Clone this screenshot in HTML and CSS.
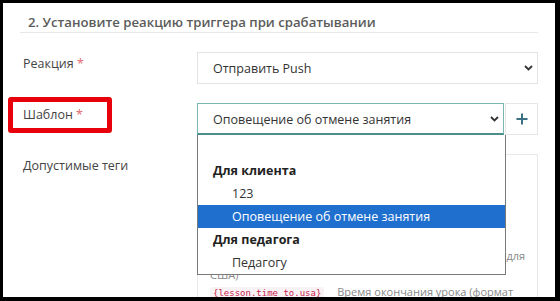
FILE: index.html
```html
<!DOCTYPE html>
<html lang="ru">
<head>
    <meta charset="UTF-8">
    <title>Триггер</title>
    <link rel="stylesheet" href="styles.css">
</head>
<body>
<div class="frame">
    <div class="section">
        <h3 class="section-title">2. Установите реакцию триггера при срабатывании</h3>

        <div class="row">
            <label class="row-label">Реакция <span class="req">*</span></label>
            <div class="control">
                <div class="select">
                    <span>Отправить Push</span>
                    <svg class="chev" width="9" height="6" viewBox="0 0 9 6"><path d="M1 1l3.5 3.5L8 1" fill="none" stroke="#333" stroke-width="1.8"/></svg>
                </div>
            </div>
        </div>

        <div class="row">
            <label class="row-label">Шаблон <span class="req">*</span></label>
            <div class="control control-group">
                <div class="select select-open">
                    <span>Оповещение об отмене занятия</span>
                    <svg class="chev" width="9" height="6" viewBox="0 0 9 6"><path d="M1 1l3.5 3.5L8 1" fill="none" stroke="#333" stroke-width="1.8"/></svg>
                </div>
                <button class="add-btn" type="button">
                    <svg width="12" height="12" viewBox="0 0 12 12"><path d="M6 0.5v11M0.5 6h11" stroke="#3b6f82" stroke-width="2"/></svg>
                </button>

                <!-- открытый список шаблонов -->
                <ul class="dropdown">
                    <li class="opt-empty"></li>
                    <li class="opt-group">Для клиента</li>
                    <li class="opt">123</li>
                    <li class="opt opt-active">Оповещение об отмене занятия</li>
                    <li class="opt-group">Для педагога</li>
                    <li class="opt">Педагогу</li>
                </ul>
            </div>
        </div>

        <div class="row">
            <label class="row-label">Допустимые теги</label>
            <div class="tags-box">
                <p class="tag"><code>{client.name}</code> Имя клиента</p>
                <p class="tag"><code>{lesson.date}</code> Дата урока</p>
                <p class="tag"><code>{lesson.time_from}</code> Время начала урока</p>
                <p class="tag"><code>{lesson.time_to}</code> Время окончания урока</p>
                <p class="tag"><code>{lesson.time_from.usa}</code> Время начала урока (формат для США)</p>
                <p class="tag"><code>{lesson.time_to.usa}</code> Время окончания урока (формат для США)</p>
            </div>
        </div>
    </div>

    <div class="highlight"></div>
</div>
</body>
</html>
```

FILE: styles.css
```css
body {
    margin: 0;
    background: #000;
    font-family: "Open Sans", "Noto Sans", sans-serif;
}
.frame {
    position: relative;
    margin: 3px 0 0 3px;
    width: 552px;
    height: 294px;
    background: #fff;
    overflow: hidden;
}
.section {
    padding: 9px 17px 0 17px;
}
.section-title {
    margin: 0;
    padding-left: 8px;
    font-size: 13.2px;
    font-weight: 600;
    line-height: 20px;
    color: #5b5b5b;
    border-bottom: 1px solid #e8e8e8;
}
.row {
    display: grid;
    grid-template-columns: 177px 1fr;
    margin-top: 19px;
}
.row-label {
    padding: 3px 0 0 3px;
    font-size: 12.5px;
    line-height: 18px;
    color: #444;
}
.req {
    color: #e46a6a;
}
.control {
    position: relative;
}
.control-group {
    display: flex;
}
.select {
    display: flex;
    align-items: center;
    justify-content: space-between;
    height: 32px;
    box-sizing: border-box;
    padding: 0 4px 0 15px;
    border: 1px solid #e3e3e3;
    font-size: 12.5px;
    color: #333;
}
.select-open {
    flex: 1;
    border-color: #79b8b1;
    border-bottom: 2px solid #4b8d88;
    padding-top: 1px;
}
.add-btn {
    width: 33px;
    height: 32px;
    margin: 0 0 0 1px;
    padding: 0;
    border: 1px solid #e6e6e6;
    background: #fff;
    display: flex;
    align-items: center;
    justify-content: center;
}
.dropdown {
    position: absolute;
    left: 0;
    top: 32px;
    width: 309px;
    margin: 0;
    padding: 0;
    list-style: none;
    box-sizing: border-box;
    background: #fff;
    border: 1px solid #7a7a7a;
    border-top: none;
    font-size: 12.5px;
    color: #333;
    z-index: 2;
}
.dropdown li {
    height: 23px;
    line-height: 23px;
}
.dropdown .opt-empty {
    height: 24px;
}
.opt-group {
    padding-left: 15px;
    font-weight: 700;
    color: #222;
}
.opt {
    padding-left: 34px;
}
.opt-active {
    background: #1f6fcf;
    color: #fff;
}
.tags-box {
    border: 1px solid #e8e8e8;
    padding: 16px 6px 0 12px;
    height: 200px;
}
.tag {
    margin: 0;
    font-size: 11px;
    line-height: 17px;
    color: #888;
}
.tag code {
    font-family: "DejaVu Sans Mono", "Liberation Mono", monospace;
    font-size: 9px;
    color: #c7254e;
    background: #f9f2f4;
    padding: 1px 3px;
    border-radius: 3px;
    margin-right: 10px;
}
.highlight {
    position: absolute;
    left: 5px;
    top: 94px;
    width: 94px;
    height: 26px;
    border: 5px solid #e8000b;
    border-radius: 3px;
}
```
